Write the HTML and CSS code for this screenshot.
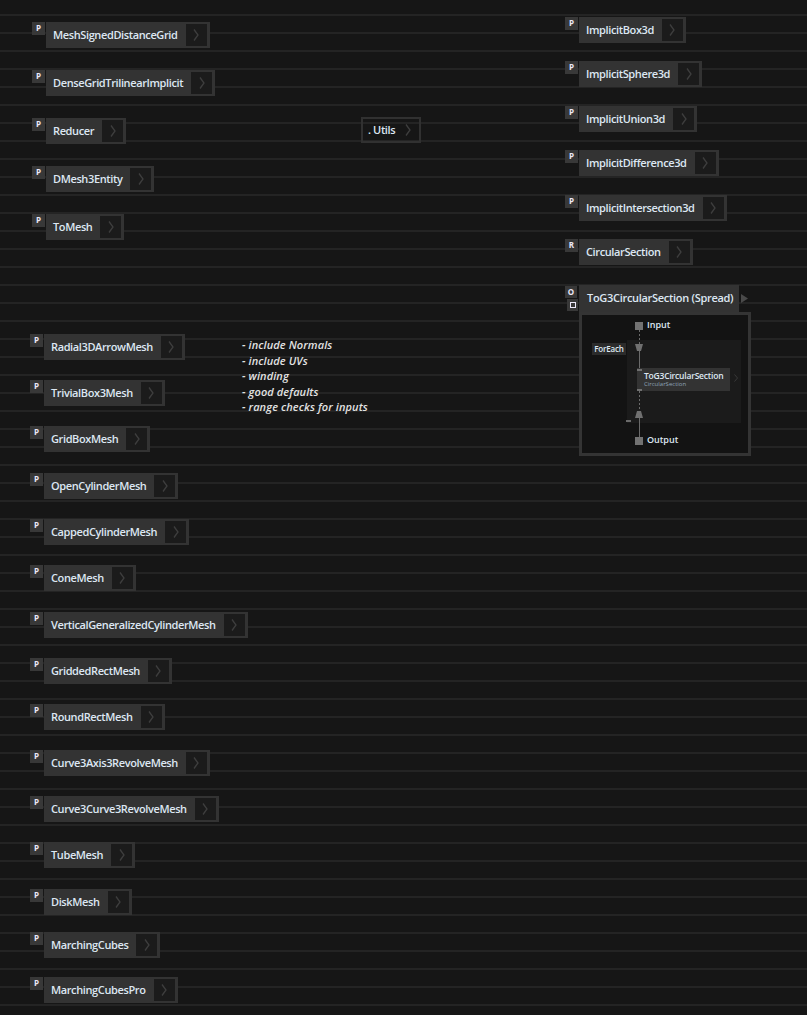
FILE: index.html
```html
<!DOCTYPE html>
<html lang="en">
<head>
    <meta charset="UTF-8">
    <meta name="viewport" content="width=device-width, initial-scale=1.0">
    <title>Patch</title>
    <link rel="stylesheet" href="styles.css">
</head>
<body>
    <div class="canvas">
        <!-- left column, top group -->
        <div class="node" style="left:32px;top:22px"><span class="badge">P</span><div class="body"><span class="label">MeshSignedDistanceGrid</span><span class="out"><svg width="6" height="12" viewBox="0 0 6 12"><polyline points="1,0.5 5,6 1,11.5" /></svg></span></div></div>
        <div class="node" style="left:32px;top:70px"><span class="badge">P</span><div class="body"><span class="label">DenseGridTrilinearImplicit</span><span class="out"><svg width="6" height="12" viewBox="0 0 6 12"><polyline points="1,0.5 5,6 1,11.5" /></svg></span></div></div>
        <div class="node" style="left:32px;top:118px"><span class="badge">P</span><div class="body"><span class="label">Reducer</span><span class="out"><svg width="6" height="12" viewBox="0 0 6 12"><polyline points="1,0.5 5,6 1,11.5" /></svg></span></div></div>
        <div class="node" style="left:32px;top:166px"><span class="badge">P</span><div class="body"><span class="label">DMesh3Entity</span><span class="out"><svg width="6" height="12" viewBox="0 0 6 12"><polyline points="1,0.5 5,6 1,11.5" /></svg></span></div></div>
        <div class="node" style="left:32px;top:214px"><span class="badge">P</span><div class="body"><span class="label">ToMesh</span><span class="out"><svg width="6" height="12" viewBox="0 0 6 12"><polyline points="1,0.5 5,6 1,11.5" /></svg></span></div></div>

        <!-- category -->
        <div class="node category" style="left:361px;top:117px"><span class="label">. Utils</span><svg width="6" height="12" viewBox="0 0 6 12"><polyline points="1,0.5 5,6 1,11.5" /></svg></div>

        <!-- right column -->
        <div class="node" style="left:565px;top:17px"><span class="badge">P</span><div class="body"><span class="label">ImplicitBox3d</span><span class="out"><svg width="6" height="12" viewBox="0 0 6 12"><polyline points="1,0.5 5,6 1,11.5" /></svg></span></div></div>
        <div class="node" style="left:565px;top:61px"><span class="badge">P</span><div class="body"><span class="label">ImplicitSphere3d</span><span class="out"><svg width="6" height="12" viewBox="0 0 6 12"><polyline points="1,0.5 5,6 1,11.5" /></svg></span></div></div>
        <div class="node" style="left:565px;top:106px"><span class="badge">P</span><div class="body"><span class="label">ImplicitUnion3d</span><span class="out"><svg width="6" height="12" viewBox="0 0 6 12"><polyline points="1,0.5 5,6 1,11.5" /></svg></span></div></div>
        <div class="node" style="left:565px;top:150px"><span class="badge">P</span><div class="body"><span class="label">ImplicitDifference3d</span><span class="out"><svg width="6" height="12" viewBox="0 0 6 12"><polyline points="1,0.5 5,6 1,11.5" /></svg></span></div></div>
        <div class="node" style="left:565px;top:195px"><span class="badge">P</span><div class="body"><span class="label">ImplicitIntersection3d</span><span class="out"><svg width="6" height="12" viewBox="0 0 6 12"><polyline points="1,0.5 5,6 1,11.5" /></svg></span></div></div>
        <div class="node" style="left:565px;top:239px"><span class="badge">R</span><div class="body"><span class="label">CircularSection</span><span class="out"><svg width="6" height="12" viewBox="0 0 6 12"><polyline points="1,0.5 5,6 1,11.5" /></svg></span></div></div>

        <!-- region node -->
        <div class="region" style="left:565px;top:285px">
            <div class="region__head">
                <div class="region__badges">
                    <span class="badge badge--o">O</span>
                    <span class="badge badge--sq"><i></i></span>
                </div>
                <div class="region__title">ToG3CircularSection (Spread)</div>
                <svg class="region__arrow" width="7" height="9" viewBox="0 0 7 9"><polygon points="0,0 7,4.5 0,9" /></svg>
            </div>
            <div class="region__frame">
                <svg class="region__wires" width="172" height="144" viewBox="0 0 172 144">
                    <line x1="60.5" y1="18" x2="60.5" y2="32" class="dash" />
                    <polygon points="56,32 64,32 62,39 58,39" />
                    <line x1="60.5" y1="39" x2="60.5" y2="56" />
                    <line x1="60.5" y1="79" x2="60.5" y2="99" class="dash" />
                    <polygon points="58,99 62,99 64,106 56,106" />
                    <line x1="60.5" y1="106" x2="60.5" y2="125" />
                </svg>
                <span class="pin pin--in"></span>
                <span class="pin-label pin-label--in">Input</span>
                <div class="foreach"></div>
                <span class="foreach__label">ForEach</span>
                <span class="foreach__stub"></span>
                <div class="inner">
                    <span class="inner__pin inner__pin--top"></span>
                    <span class="inner__pin inner__pin--bottom"></span>
                    <span class="inner__name">ToG3CircularSection</span>
                    <span class="inner__type">CircularSection</span>
                    <svg class="inner__chev" width="4" height="8" viewBox="0 0 4 8"><polyline points="0.5,0.5 3.5,4 0.5,7.5" /></svg>
                </div>
                <span class="pin pin--out"></span>
                <span class="pin-label pin-label--out">Output</span>
            </div>
        </div>

        <!-- comment -->
        <div class="comment" style="left:242px;top:337px">
            <p>- include Normals</p>
            <p>- include UVs</p>
            <p>- winding</p>
            <p>- good defaults</p>
            <p>- range checks for inputs</p>
        </div>

        <!-- left column, mesh group -->
        <div class="node" style="left:30px;top:334px"><span class="badge">P</span><div class="body"><span class="label">Radial3DArrowMesh</span><span class="out"><svg width="6" height="12" viewBox="0 0 6 12"><polyline points="1,0.5 5,6 1,11.5" /></svg></span></div></div>
        <div class="node" style="left:30px;top:380px"><span class="badge">P</span><div class="body"><span class="label">TrivialBox3Mesh</span><span class="out"><svg width="6" height="12" viewBox="0 0 6 12"><polyline points="1,0.5 5,6 1,11.5" /></svg></span></div></div>
        <div class="node" style="left:30px;top:426px"><span class="badge">P</span><div class="body"><span class="label">GridBoxMesh</span><span class="out"><svg width="6" height="12" viewBox="0 0 6 12"><polyline points="1,0.5 5,6 1,11.5" /></svg></span></div></div>
        <div class="node" style="left:30px;top:473px"><span class="badge">P</span><div class="body"><span class="label">OpenCylinderMesh</span><span class="out"><svg width="6" height="12" viewBox="0 0 6 12"><polyline points="1,0.5 5,6 1,11.5" /></svg></span></div></div>
        <div class="node" style="left:30px;top:519px"><span class="badge">P</span><div class="body"><span class="label">CappedCylinderMesh</span><span class="out"><svg width="6" height="12" viewBox="0 0 6 12"><polyline points="1,0.5 5,6 1,11.5" /></svg></span></div></div>
        <div class="node" style="left:30px;top:565px"><span class="badge">P</span><div class="body"><span class="label">ConeMesh</span><span class="out"><svg width="6" height="12" viewBox="0 0 6 12"><polyline points="1,0.5 5,6 1,11.5" /></svg></span></div></div>
        <div class="node" style="left:30px;top:612px"><span class="badge">P</span><div class="body"><span class="label">VerticalGeneralizedCylinderMesh</span><span class="out"><svg width="6" height="12" viewBox="0 0 6 12"><polyline points="1,0.5 5,6 1,11.5" /></svg></span></div></div>
        <div class="node" style="left:30px;top:658px"><span class="badge">P</span><div class="body"><span class="label">GriddedRectMesh</span><span class="out"><svg width="6" height="12" viewBox="0 0 6 12"><polyline points="1,0.5 5,6 1,11.5" /></svg></span></div></div>
        <div class="node" style="left:30px;top:704px"><span class="badge">P</span><div class="body"><span class="label">RoundRectMesh</span><span class="out"><svg width="6" height="12" viewBox="0 0 6 12"><polyline points="1,0.5 5,6 1,11.5" /></svg></span></div></div>
        <div class="node" style="left:30px;top:750px"><span class="badge">P</span><div class="body"><span class="label">Curve3Axis3RevolveMesh</span><span class="out"><svg width="6" height="12" viewBox="0 0 6 12"><polyline points="1,0.5 5,6 1,11.5" /></svg></span></div></div>
        <div class="node" style="left:30px;top:796px"><span class="badge">P</span><div class="body"><span class="label">Curve3Curve3RevolveMesh</span><span class="out"><svg width="6" height="12" viewBox="0 0 6 12"><polyline points="1,0.5 5,6 1,11.5" /></svg></span></div></div>
        <div class="node" style="left:30px;top:842px"><span class="badge">P</span><div class="body"><span class="label">TubeMesh</span><span class="out"><svg width="6" height="12" viewBox="0 0 6 12"><polyline points="1,0.5 5,6 1,11.5" /></svg></span></div></div>
        <div class="node" style="left:30px;top:889px"><span class="badge">P</span><div class="body"><span class="label">DiskMesh</span><span class="out"><svg width="6" height="12" viewBox="0 0 6 12"><polyline points="1,0.5 5,6 1,11.5" /></svg></span></div></div>
        <div class="node" style="left:30px;top:932px"><span class="badge">P</span><div class="body"><span class="label">MarchingCubes</span><span class="out"><svg width="6" height="12" viewBox="0 0 6 12"><polyline points="1,0.5 5,6 1,11.5" /></svg></span></div></div>
        <div class="node" style="left:30px;top:977px"><span class="badge">P</span><div class="body"><span class="label">MarchingCubesPro</span><span class="out"><svg width="6" height="12" viewBox="0 0 6 12"><polyline points="1,0.5 5,6 1,11.5" /></svg></span></div></div>
    </div>
</body>
</html>
```

FILE: styles.css
```css
body, html {
    margin: 0;
    padding: 0;
    background: #161616;
    overflow: hidden;
}
.canvas {
    position: relative;
    width: 807px;
    height: 1015px;
    background-color: #161616;
    background-image: repeating-linear-gradient(to bottom, transparent 0, transparent 14px, #242424 14px, #242424 16px, transparent 16px, transparent 18px);
    font-family: "Open Sans", "Noto Sans", sans-serif;
    overflow: hidden;
}
.node {
    position: absolute;
    display: flex;
    align-items: flex-start;
}
.badge {
    width: 13px;
    height: 13px;
    margin-right: 1px;
    background: #383838;
    color: #ece8f8;
    font-size: 8px;
    font-weight: 700;
    line-height: 11px;
    text-align: center;
}
.body {
    display: flex;
    align-items: center;
    box-sizing: border-box;
    height: 26px;
    padding: 2px 3px 2px 7px;
    background: #333333;
}
.label {
    color: #dde7f2;
    font-size: 11px;
    font-weight: 600;
    letter-spacing: -0.38px;
    line-height: 20px;
    white-space: nowrap;
    padding-right: 8px;
    margin-top: -1px;
}
.out {
    display: flex;
    align-items: center;
    justify-content: center;
    width: 21px;
    height: 22px;
    background: #1b1b1b;
}
.out svg polyline,
.category svg polyline {
    fill: none;
    stroke: #3e3e3e;
    stroke-width: 1.3;
}
.category {
    box-sizing: border-box;
    height: 26px;
    align-items: center;
    padding: 0 8px 0 5px;
    border: 2px solid #313131;
}
.category .label {
    padding-right: 10px;
}

/* region */
.region {
    position: absolute;
    width: 190px;
}
.region__head {
    display: flex;
    align-items: flex-start;
    height: 27px;
}
.region__badges {
    display: flex;
    flex-direction: column;
    width: 14px;
}
.badge--o {
    width: 12px;
    height: 12px;
    margin-top: 1px;
    line-height: 11px;
}
.badge--sq {
    width: 11px;
    height: 12px;
    margin: 1px 0 0 2px;
    display: flex;
    align-items: center;
    justify-content: center;
}
.badge--sq i {
    width: 4px;
    height: 4px;
    border: 1px solid #ece8f8;
}
.region__title {
    box-sizing: border-box;
    width: 160px;
    height: 27px;
    padding-left: 8px;
    background: #333333;
    color: #dde7f2;
    font-size: 11px;
    font-weight: 600;
    letter-spacing: -0.3px;
    line-height: 25px;
    white-space: nowrap;
}
.region__arrow {
    margin: 9px 0 0 2px;
}
.region__arrow polygon {
    fill: #4a4a4a;
}
.region__frame {
    position: relative;
    box-sizing: border-box;
    width: 172px;
    height: 144px;
    margin-left: 14px;
    border: 3px solid #343434;
    background: #131313;
}
.region__wires {
    position: absolute;
    left: -3px;
    top: -3px;
    z-index: 2;
}
.region__wires line {
    stroke: #6a6a6a;
    stroke-width: 1;
}
.region__wires line.dash {
    stroke-dasharray: 2 2;
}
.region__wires polygon {
    fill: #707070;
}
.pin {
    position: absolute;
    left: 53px;
    width: 8px;
    height: 8px;
    background: #727272;
    z-index: 3;
}
.pin--in { top: 7px; }
.pin--out { top: 122px; }
.pin-label {
    position: absolute;
    left: 65px;
    color: #dde7f2;
    font-size: 9px;
    font-weight: 600;
    line-height: 12px;
}
.pin-label--in { top: 4px; }
.pin-label--out { top: 119px; }
.foreach {
    position: absolute;
    left: 45px;
    top: 25px;
    width: 114px;
    height: 83px;
    background: #1b1b1b;
}
.foreach__label {
    position: absolute;
    left: 10px;
    top: 28px;
    width: 34px;
    height: 12px;
    background: #2b2b2b;
    color: #dde7f2;
    font-size: 8px;
    font-weight: 600;
    letter-spacing: -0.2px;
    line-height: 12px;
    text-align: center;
}
.foreach__stub {
    position: absolute;
    left: 44px;
    top: 105px;
    width: 5px;
    height: 2px;
    background: #6a6a6a;
}
.inner {
    position: absolute;
    left: 55px;
    top: 53px;
    box-sizing: border-box;
    width: 93px;
    height: 23px;
    padding: 2px 0 0 7px;
    background: #333333;
    z-index: 1;
}
.inner__pin {
    position: absolute;
    left: 0;
    width: 5px;
    height: 2px;
    background: #707070;
}
.inner__pin--top { top: 1px; }
.inner__pin--bottom { top: 21px; }
.inner__name {
    display: block;
    color: #dde7f2;
    font-size: 8.5px;
    font-weight: 600;
    letter-spacing: -0.2px;
    line-height: 11px;
    white-space: nowrap;
}
.inner__type {
    display: block;
    color: #8ea3b8;
    font-size: 6px;
    line-height: 7px;
    white-space: nowrap;
}
.inner__chev {
    position: absolute;
    right: -8px;
    top: 6px;
}
.inner__chev polyline {
    fill: none;
    stroke: #3a3a3a;
}

/* comment */
.comment {
    position: absolute;
    color: #e2e2e2;
    font-size: 11px;
    font-style: italic;
    font-weight: 600;
    letter-spacing: 0.1px;
}
.comment p {
    margin: 0;
    line-height: 15.5px;
    white-space: nowrap;
}
```
